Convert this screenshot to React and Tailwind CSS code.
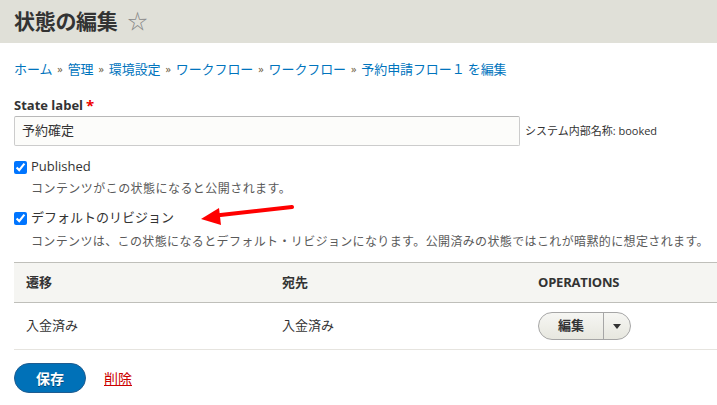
import React from "react";

function Sep() {
  return <span className="mx-[5px] text-[#6b5a3a] text-[11px]">»</span>;
}

export default function App() {
  return (
    <div className="w-[717px] h-[405px] overflow-hidden bg-white text-[#333] relative font-['Open_Sans','Noto_Sans_CJK_JP',sans-serif]">
      <div className="h-[43px] bg-[#e0e0d8] px-[14px] flex items-center">
        <h1 className="text-[21px] font-bold leading-none text-[#333] tracking-[-0.3px]">状態の編集</h1>
        <span className="ml-[10px] text-[20px] leading-none text-[#888] mt-[1px]">☆</span>
      </div>
      <div className="px-[14px]">
        <nav className="mt-[16px] h-[20px] flex items-center text-[13px] leading-[20px] tracking-[-0.1px]">
          <a className="text-[#0074bd]">ホーム</a>
          <Sep />
          <a className="text-[#0074bd]">管理</a>
          <Sep />
          <a className="text-[#0074bd]">環境設定</a>
          <Sep />
          <a className="text-[#0074bd]">ワークフロー</a>
          <Sep />
          <a className="text-[#0074bd]">ワークフロー</a>
          <Sep />
          <a className="text-[#0074bd]">予約申請フロー１ を編集</a>
        </nav>
        <div className="mt-[17px] h-[18px] flex items-center text-[13px] font-bold leading-[18px]">
          State label<span className="ml-[3px] text-[#e00] text-[15px] leading-none">*</span>
        </div>
        <div className="mt-[2px] flex items-center">
          <div className="w-[506px] h-[30px] border border-[#ccc] border-t-[#b8b8b8] rounded-[2px] bg-[#fcfcfa] flex items-center px-[7px] text-[13px] text-[#333]">
            予約確定
          </div>
          <span className="ml-[5px] text-[11px] text-[#333]">システム内部名称: booked</span>
        </div>
        <label className="mt-[14px] h-[14px] flex items-center text-[13px]">
          <input type="checkbox" defaultChecked className="m-0 w-[13px] h-[13px]" />
          <span className="ml-[4px]">Published</span>
        </label>
        <div className="mt-[8px] ml-[17px] h-[14px] flex items-center text-[12px] tracking-[0.45px] text-[#595959]">
          コンテンツがこの状態になると公開されます。
        </div>
        <label className="mt-[15px] h-[14px] flex items-center text-[13px]">
          <input type="checkbox" defaultChecked className="m-0 w-[13px] h-[13px]" />
          <span className="ml-[4px]">デフォルトのリビジョン</span>
        </label>
        <div className="mt-[10px] ml-[17px] h-[14px] flex items-center text-[12px] tracking-[0.37px] whitespace-nowrap text-[#595959]">
          コンテンツは、この状態になるとデフォルト・リビジョンになります。公開済みの状態ではこれが暗黙的に想定されます。
        </div>
        <div className="mt-[13px] w-[768px] text-[13px]">
          <div className="h-[41px] bg-[#f5f5f2] border-y border-[#bfbfba] grid grid-cols-3 items-center font-bold">
            <div className="px-[12px]">遷移</div>
            <div className="px-[12px]">宛先</div>
            <div className="px-[12px] tracking-[-0.2px]">OPERATIONS</div>
          </div>
          <div className="h-[47px] border-b border-[#e6e4df] grid grid-cols-3 items-center">
            <div className="px-[12px]">入金済み</div>
            <div className="px-[12px]">入金済み</div>
            <div className="px-[12px] flex">
              <div className="h-[28px] flex rounded-full border border-[#a6a6a6] bg-gradient-to-b from-[#f6f6f3] to-[#e7e7df] overflow-hidden">
                <div className="w-[65px] flex items-center justify-center font-bold text-[13px] border-r border-[#a6a6a6]">編集</div>
                <div className="w-[26px] flex items-center justify-center">
                  <svg width="8" height="5" viewBox="0 0 8 5"><path d="M0 0h8L4 5z" fill="#333" /></svg>
                </div>
              </div>
            </div>
          </div>
        </div>
        <div className="mt-[13px] flex items-center">
          <button className="w-[72px] h-[30px] rounded-full bg-[#0071b8] border border-[#1e5c90] text-white font-bold text-[14px] [text-shadow:0_1px_rgba(0,0,0,0.4)]">保存</button>
          <a className="ml-[18px] text-[14px] text-[#c00] underline">削除</a>
        </div>
      </div>
      <svg className="absolute left-0 top-0 pointer-events-none" width="717" height="405">
        <line x1="292" y1="207" x2="216" y2="215.5" stroke="#f00" strokeWidth="4" strokeLinecap="round" />
        <polygon points="201,219 219,208 221,225" fill="#f00" />
      </svg>
    </div>
  );
}
